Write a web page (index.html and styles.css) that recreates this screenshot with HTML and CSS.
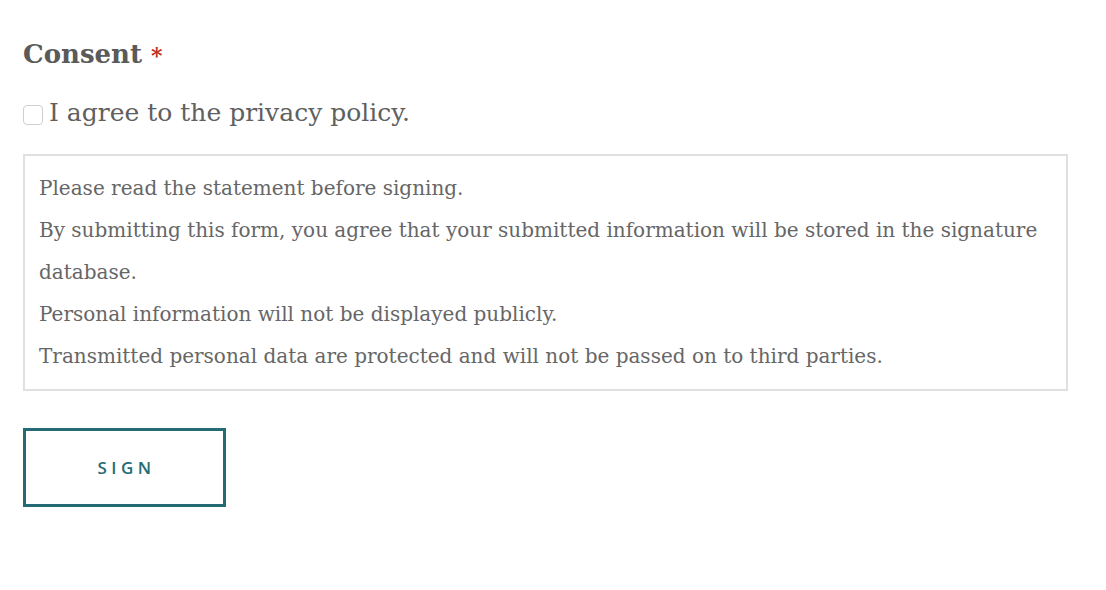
FILE: index.html
```html
<!DOCTYPE html>
<html>
<head>
<meta charset="utf-8">
<link rel="stylesheet" href="styles.css">
</head>
<body>
<form class="form">
  <div class="field">
    <div class="legend">Consent <span class="req">*</span></div>
    <label class="check"><span class="box"></span><span class="check-text">I agree to the privacy policy.</span></label>
  </div>
  <div class="statement">
    <p>Please read the statement before signing.</p>
    <p>By submitting this form, you agree that your submitted information will be stored in the signature database.</p>
    <p>Personal information will not be displayed publicly.</p>
    <p>Transmitted personal data are protected and will not be passed on to third parties.</p>
  </div>
  <button type="button" class="btn">SIGN</button>
</form>
</body>
</html>
```
FILE: styles.css
```css
html, body { margin: 0; padding: 0; background: #fff; }
body { font-family: "DejaVu Serif", serif; color: #606060; }
.form { padding: 36px 38px 0 23px; display: flex; flex-direction: column; align-items: flex-start; }
.field { display: flex; flex-direction: column; }
.legend { font-size: 26px; font-weight: bold; color: #5a5a5a; line-height: 36px; }
.req { color: #c0321e; font-size: 22px; }
.check { display: flex; align-items: center; margin-top: 22px; gap: 6px; }
.box { width: 20px; height: 20px; border: 1px solid #cfcfcf; border-radius: 4px; box-sizing: border-box; margin-top: 4px; }
.check-text { font-size: 25px; line-height: 36px; color: #606060; }
.statement { align-self: stretch; margin-top: 23px; border: 2px solid #e0e0e0; padding: 11px 14px 12px 14px; }
.statement p { margin: 0; font-size: 20px; line-height: 42px; color: #666; }
.btn { margin-top: 37px; width: 203px; height: 79px; border: 3px solid #246c75; background: #fff; color: #246c75; font-family: "Open Sans", sans-serif; font-weight: 600; font-size: 17px; letter-spacing: 4.5px; padding: 0 0 0 4px; }
```
